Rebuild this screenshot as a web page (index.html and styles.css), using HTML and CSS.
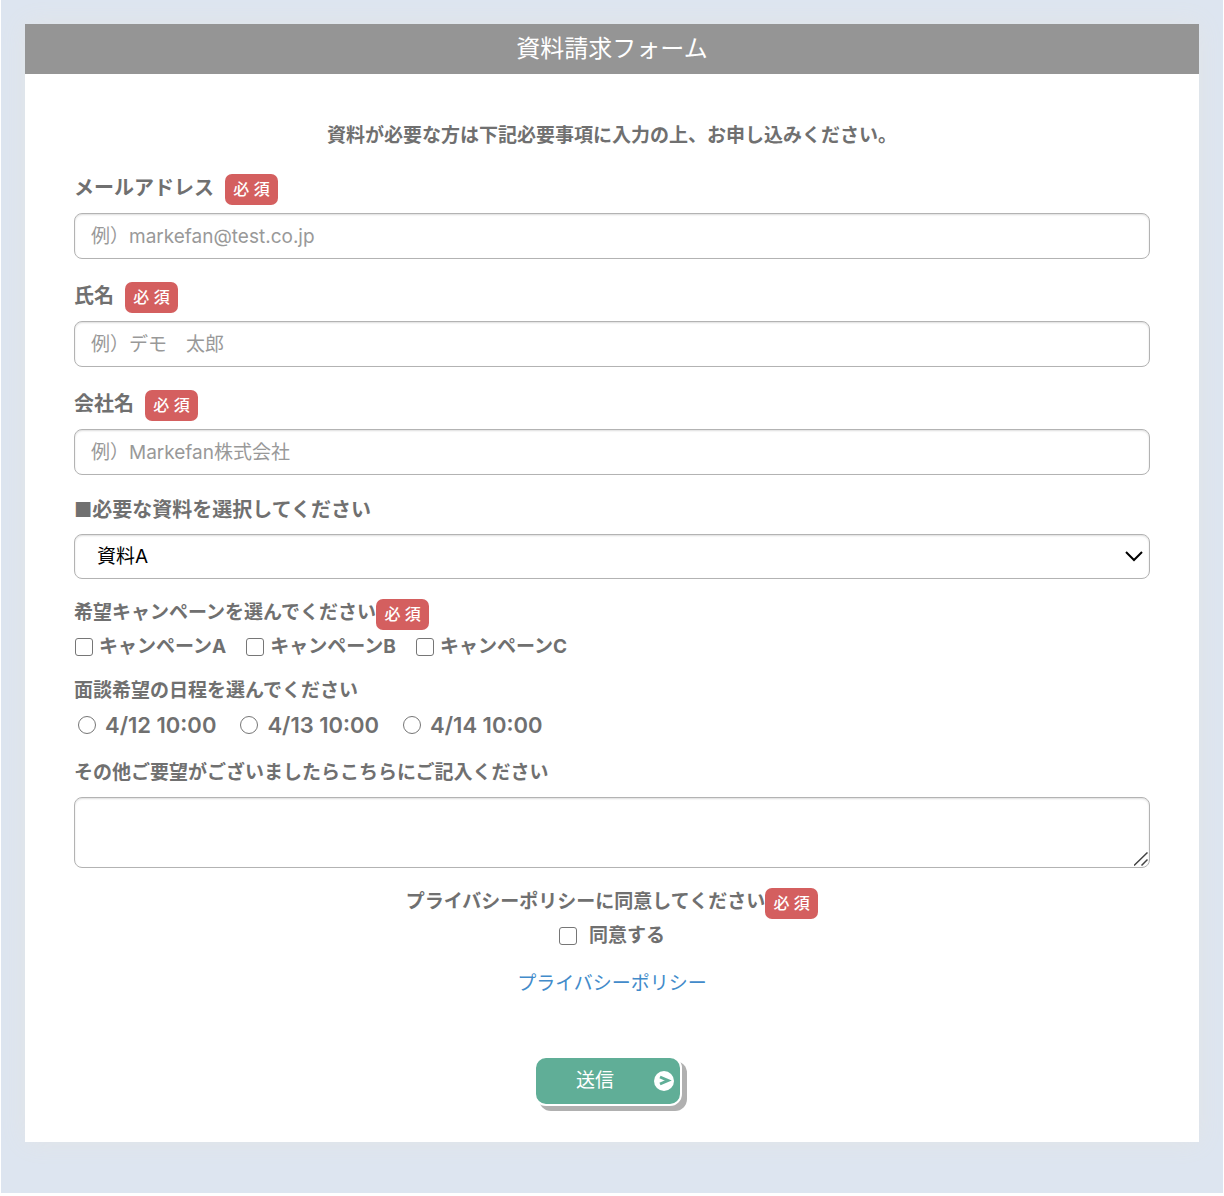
FILE: index.html
```html
<!DOCTYPE html>
<html lang="ja">
<head>
<meta charset="utf-8">
<meta name="viewport" content="width=device-width, initial-scale=1">
<title>資料請求フォーム</title>
<link rel="stylesheet" href="styles.css">
</head>
<body>
<div class="page">
  <main class="panel">
    <h1 class="title">資料請求フォーム</h1>
    <form class="form">
      <p class="intro">資料が必要な方は下記必要事項に入力の上、お申し込みください。</p>

      <div class="field">
        <div class="heading">
          <label class="label" for="email">メールアドレス</label>
          <span class="badge">必 須</span>
        </div>
        <input class="control" id="email" type="email" placeholder="例）markefan@test.co.jp" required>
      </div>

      <div class="field">
        <div class="heading">
          <label class="label" for="name">氏名</label>
          <span class="badge">必 須</span>
        </div>
        <input class="control" id="name" type="text" placeholder="例）デモ　太郎" required>
      </div>

      <div class="field">
        <div class="heading">
          <label class="label" for="company">会社名</label>
          <span class="badge">必 須</span>
        </div>
        <input class="control" id="company" type="text" placeholder="例）Markefan株式会社" required>
      </div>

      <div class="field spaced">
        <label class="label" for="material">■必要な資料を選択してください</label>
        <div class="control-wrap">
          <select class="control select" id="material">
            <option>資料A</option>
            <option>資料B</option>
          </select>
          <svg class="chevron" viewBox="0 0 18 12" aria-hidden="true"><path d="M1 2l8 8 8-8"/></svg>
        </div>
      </div>

      <div class="choices" role="group" aria-labelledby="campaign-heading">
        <div class="heading compact">
          <span id="campaign-heading">希望キャンペーンを選んでください</span>
          <span class="badge">必 須</span>
        </div>
        <div class="options">
          <label class="option"><input class="check" type="checkbox" name="campaign" value="A">キャンペーンA</label>
          <label class="option"><input class="check" type="checkbox" name="campaign" value="B">キャンペーンB</label>
          <label class="option"><input class="check" type="checkbox" name="campaign" value="C">キャンペーンC</label>
        </div>
      </div>

      <div class="choices dates" role="group" aria-labelledby="date-heading">
        <span id="date-heading">面談希望の日程を選んでください</span>
        <div class="options">
          <label class="option"><input class="check radio" type="radio" name="date" value="12">4/12 10:00</label>
          <label class="option"><input class="check radio" type="radio" name="date" value="13">4/13 10:00</label>
          <label class="option"><input class="check radio" type="radio" name="date" value="14">4/14 10:00</label>
        </div>
      </div>

      <div class="field spaced">
        <label for="notes">その他ご要望がございましたらこちらにご記入ください</label>
        <div class="control-wrap">
          <textarea class="control textarea" id="notes"></textarea>
          <svg class="grip" viewBox="0 0 14 14" aria-hidden="true"><path d="M0 13.500L13.500 .5M7.500 13.500l6-6"/></svg>
        </div>
      </div>

      <div class="choices consent" role="group" aria-labelledby="consent-heading">
        <div class="heading compact">
          <span id="consent-heading">プライバシーポリシーに同意してください</span>
          <span class="badge">必 須</span>
        </div>
        <label class="option"><input class="check" type="checkbox" name="consent" required>同意する</label>
      </div>

      <a class="policy" href="#">プライバシーポリシー</a>

      <button class="submit" type="submit">
        <span class="submit-text">送信</span>
        <svg class="submit-icon" viewBox="0 0 20 20" aria-hidden="true"><circle cx="10" cy="10" r="10"/><path d="M6 6l8 3.500-8 3.500"/></svg>
      </button>
    </form>
  </main>
</div>
</body>
</html>
```
FILE: styles.css
```css
* {
  box-sizing: border-box;
}

body {
  margin: 0 1px;
  background: #fff;
  color: #707070;
  font: bold 19px/24px Inter, "Noto Sans CJK JP", sans-serif;
}

.page {
  padding: 24px 24px 51px;
  background: #dde5f0;
}

.panel {
  background: #fff;
  box-shadow: 0 0 24px #e2e4e6;
}

.title {
  margin: 0;
  background: #959595;
  color: #fff;
  font-size: 24px;
  font-weight: 400;
  line-height: 50px;
  text-align: center;
}

.form {
  display: flex;
  flex-direction: column;
  padding: 50px 49px 36px;
}

.intro {
  margin: 0 0 26px;
  text-align: center;
}

.field {
  display: flex;
  flex-direction: column;
  gap: 8px;
  margin-bottom: 23px;
}

.spaced {
  gap: 12px;
  margin-bottom: 20px;
}

.heading {
  display: flex;
  gap: 11px;
  line-height: 28px;
}

.compact {
  gap: 0;
}

.label {
  font-size: 20px;
}

.badge {
  min-width: 53px;
  border-radius: 7px;
  background: #d45f5f;
  color: #fff;
  font-size: 16px;
  font-weight: 500;
  line-height: 31px;
  text-align: center;
}

.control {
  display: block;
  width: 100%;
  height: 46px;
  padding: 0 16px;
  border: 1px solid #b3b3b3;
  border-radius: 8px;
  background: #fff;
  box-shadow: inset 0 1px 2px #ddd;
  color: #000;
  font: inherit;
  font-weight: 400;
}

.control::placeholder {
  color: #999;
  opacity: 1;
}

.control-wrap {
  position: relative;
}

.select {
  height: 45px;
  padding: 0 22px;
  appearance: none;
}

.chevron {
  position: absolute;
  top: 16px;
  right: 7px;
  width: 18px;
  height: 12px;
  fill: none;
  stroke: #000;
  stroke-width: 2;
  pointer-events: none;
}

.textarea {
  height: 71px;
  padding: 10px 16px;
  resize: none;
}

.grip {
  position: absolute;
  right: 2px;
  bottom: 2px;
  width: 14px;
  height: 14px;
  fill: none;
  stroke: #444;
  stroke-width: 1.5;
  pointer-events: none;
}

.choices {
  display: flex;
  flex-direction: column;
  gap: 5px;
  margin-bottom: 20px;
}

.dates {
  gap: 10px;
  margin-bottom: 24px;
}

.options {
  display: flex;
  flex-wrap: wrap;
  gap: 20px;
  padding-left: 1px;
}

.option {
  display: flex;
  align-items: center;
  gap: 6px;
}

.dates .options {
  gap: 24px;
  padding-left: 4px;
}

.dates .option {
  gap: 9px;
  font-size: 22px;
  font-weight: 600;
}

.check {
  flex: none;
  width: 18px;
  height: 18px;
  margin: 0;
  border: 1px solid #767676;
  border-radius: 3px;
  background: #fff;
  appearance: none;
}

.radio {
  border-radius: 50%;
}

.check:checked {
  background: #767676;
  box-shadow: inset 0 0 0 3px #fff;
}

.consent {
  align-items: center;
  margin-bottom: 24px;
}

.consent .option {
  gap: 12px;
}

.policy {
  align-self: center;
  color: #428bca;
  font-weight: 400;
  text-decoration: none;
}

.submit {
  display: flex;
  align-self: center;
  align-items: center;
  width: 148px;
  height: 50px;
  margin: 60px 8px 0 0;
  padding: 0 6px 0 0;
  border: 2px solid #fff;
  border-radius: 12px;
  background: #60ae97;
  box-shadow: 5px 5px 0 #b0b0b0;
  color: #fff;
  font: inherit;
  font-weight: 400;
}

.submit-text {
  flex: 1;
}

.submit-icon {
  width: 20px;
  height: 20px;
  fill: #fff;
}

.submit-icon path {
  fill: none;
  stroke: #60ae97;
  stroke-width: 3;
}
```
